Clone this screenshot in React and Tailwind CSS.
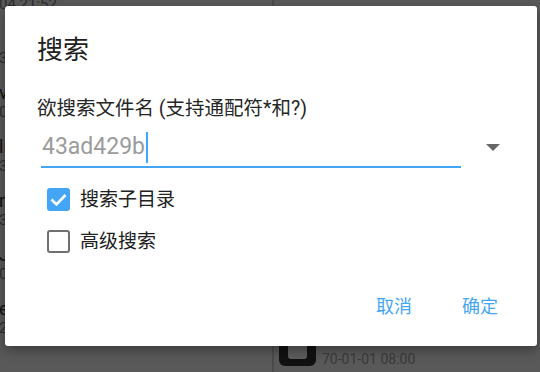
export default function App() {
  const leftItems = [
    { name: "", date: "04 21:52" },
    { name: "", date: "30-01-01 08:00" },
    { name: "vendor", date: "03-06-12 10:11" },
    { name: "lib", date: "30-01-01 08:00" },
    { name: "node", date: "30-01-01 08:00" },
    { name: "Java", date: "03-06-12 10:11" },
    { name: "etc", date: "24-01-01 08:00" },
  ];
  return (
    <div className="relative w-[540px] h-[372px] overflow-hidden bg-[#595959] font-['Roboto','Noto_Sans_CJK_SC',sans-serif]">
      {/* background panels */}
      <div className="flex h-full">
        <div className="w-[272px] h-full overflow-hidden">
          <div className="-mt-[25px] -ml-[1px] flex flex-col">
            {leftItems.map((it, i) => (
              <div key={i} className="h-[54px] flex flex-col">
                <div className="h-[20px] text-[18px] leading-[20px] text-[#111] whitespace-nowrap">{it.name}</div>
                <div className="h-[18px] text-[15px] leading-[18px] text-[#2e2e2e] whitespace-nowrap">{it.date}</div>
              </div>
            ))}
          </div>
        </div>
        <div className="w-[2px] h-full bg-[#4b4b4b]" />
        <div className="flex-1 flex flex-col justify-end pl-[5px] pb-[6px]">
          <div className="flex items-end gap-[6px]">
            <div className="w-[37px] h-[50px] rounded-[6px] bg-[#111] flex justify-center">
              <div className="w-[19px] h-[43px] rounded-b-[3px] bg-[#5c5c5c]" />
            </div>
            <div className="text-[14px] leading-[16px] text-[#3a3a3a] mb-[-1px]">70-01-01 08:00</div>
          </div>
        </div>
      </div>

      {/* dialog */}
      <div className="absolute left-[5px] top-[6px] w-[532px] h-[340px] bg-white rounded-[3px] shadow-[0_4px_12px_rgba(0,0,0,0.35)] flex flex-col">
        <div className="pl-[32px] pt-[31px] text-[26px] leading-[26px] text-[#212121]">搜索</div>
        <div className="pl-[32px] mt-[36px] text-[19.5px] leading-[19px] text-[#262626] whitespace-nowrap">欲搜索文件名 (支持通配符*和?)</div>
        <div className="flex items-start pl-[36px] mt-[12px]">
          <div className="w-[420px] h-[38px] border-b-2 border-[#42a5f5] flex items-start pl-[1px]">
            <span className="mt-[5px] text-[23px] leading-[23px] text-[#9b9b9b] font-['Roboto',sans-serif]">43ad429b</span>
            <div className="mt-[2px] ml-[1px] w-[2px] h-[31px] bg-[#42a5f5]" />
          </div>
          <svg width="14" height="7" viewBox="0 0 14 7" className="ml-[25px] mt-[14px]">
            <polygon points="0,0 14,0 7,7" fill="#666" />
          </svg>
        </div>
        <div className="flex items-center pl-[42px] mt-[20px] h-[23px]">
          <div className="w-[23px] h-[23px] rounded-[3px] bg-[#42a5f5] flex items-center justify-center">
            <svg width="23" height="23" viewBox="0 0 23 23">
              <polyline points="4.5,11.5 9.5,16.5 18.5,7" fill="none" stroke="#fff" strokeWidth="2.6" strokeLinecap="butt" strokeLinejoin="miter" />
            </svg>
          </div>
          <span className="ml-[10px] text-[19px] leading-[19px] text-[#212121]">搜索子目录</span>
        </div>
        <div className="flex items-center pl-[42px] mt-[19px] h-[23px]">
          <div className="w-[23px] h-[23px] rounded-[3px] border-[2.5px] border-[#707070] bg-white" />
          <span className="ml-[10px] text-[19px] leading-[19px] text-[#212121]">高级搜索</span>
        </div>
        <div className="flex justify-end pr-[39px] mt-[45px] gap-[50px] text-[18px] leading-[18px] text-[#45a6f2]">
          <span>取消</span>
          <span>确定</span>
        </div>
      </div>
    </div>
  );
}
